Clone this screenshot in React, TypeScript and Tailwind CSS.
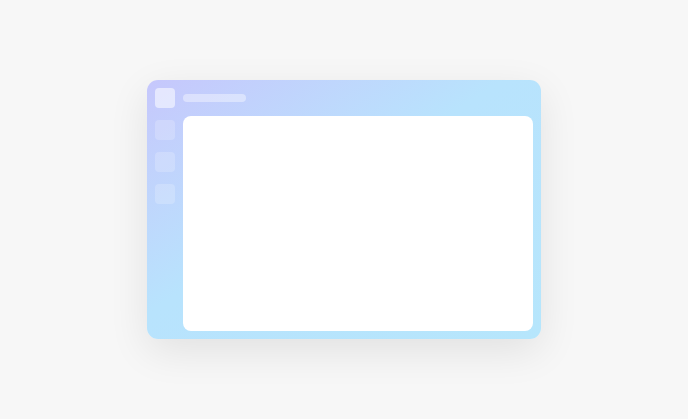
export default function App() {
  return (
    <div className="flex h-[419px] w-full items-center justify-center bg-[#f7f7f7]">
      {/* Window */}
      <div className="flex h-[259px] w-[394px] gap-2 rounded-[11px] bg-linear-to-br from-[#c6c7fc] via-[#b8e3fd] via-45% to-[#b6e6fc] p-2 shadow-[0_12px_40px_rgba(0,0,0,0.09)]">
        {/* Sidebar */}
        <div className="flex w-5 flex-col gap-3">
          <div className="h-5 w-5 rounded-[4px] bg-white/55" />
          <div className="h-5 w-5 rounded-[4px] bg-white/20" />
          <div className="h-5 w-5 rounded-[4px] bg-white/20" />
          <div className="h-5 w-5 rounded-[4px] bg-white/20" />
        </div>

        {/* Main */}
        <div className="flex flex-1 flex-col gap-2">
          <div className="flex h-5 items-center">
            <div className="h-2 w-[63px] rounded-full bg-white/40" />
          </div>
          <div className="flex-1 rounded-[8px] bg-white" />
        </div>
      </div>
    </div>
  );
}
